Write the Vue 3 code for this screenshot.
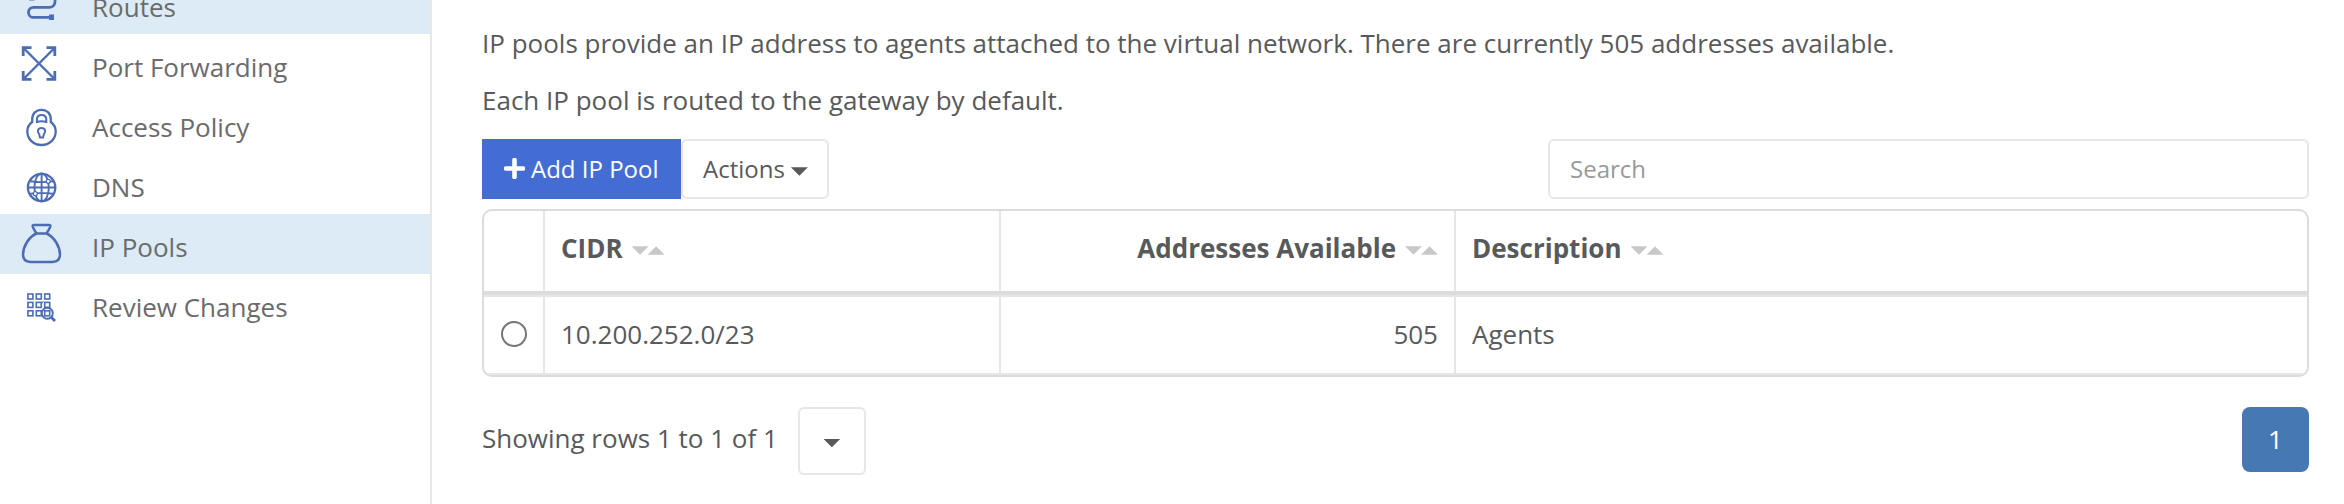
<script setup>
const navItems = [
  { label: 'Routes', icon: 'routes', active: true },
  { label: 'Port Forwarding', icon: 'forward' },
  { label: 'Access Policy', icon: 'lock' },
  { label: 'DNS', icon: 'globe' },
  { label: 'IP Pools', icon: 'pool', active: true },
  { label: 'Review Changes', icon: 'review' },
]
const columns = [
  { label: 'CIDR' },
  { label: 'Addresses Available', numeric: true },
  { label: 'Description' },
]
const rows = [{ cidr: '10.200.252.0/23', available: 505, description: 'Agents' }]
const cells = [0, 1, 2].flatMap((r) => [0, 1, 2].map((c) => ({ x: 27.9 + c * 8.4, y: 20 + r * 8.4 })))
</script>

<template>
  <div class="page">
    <nav class="sidebar">
      <a v-for="item in navItems" :key="item.label" class="nav-item" :class="{ active: item.active }">
        <svg class="nav-icon" width="80" height="60" viewBox="0 0 80 60" fill="none">
          <g v-if="item.icon === 'routes'" stroke-width="2.8">
            <path d="M29 25.500H34.500" opacity=".5" />
            <path d="M55 25.500C55.500 31 53 33.400 49.500 33.400H33.500A5 5 0 0 0 33.500 43.400H50" />
            <rect x="49" y="40.500" width="5" height="5.500" class="solid" />
          </g>
          <g v-else-if="item.icon === 'forward'" stroke-width="2.400">
            <path d="M23 13.500L55 45.500M55 13.500L23 45.500" />
            <path d="M23.200 22V13.700H31.500M46.500 13.700H54.800V22M54.800 37V45.300H46.500M31.500 45.300H23.200V37" stroke-width="2.800" />
          </g>
          <g v-else-if="item.icon === 'lock'" stroke-width="2.300">
            <path d="M32.200 28V25.200C32.200 19.500 36 15.800 41.500 15.800S50.800 19.500 50.800 25.200V28C53.800 30.300 55.700 33.500 55.700 37.200C55.700 45.300 49.500 51 41.500 51S27.300 45.300 27.300 37.200C27.300 33.500 29.200 30.300 32.200 28Z" />
            <path d="M36.900 28V25.500C36.900 22.500 38.800 21 41.500 21S46.300 22.500 46.300 25.500V28Q41.500 26.700 36.900 28Z" stroke-width="2" />
            <path d="M40 43.500L39.200 40.300C36.500 37.500 38 34 41.500 34S46.500 37.500 43.800 40.300L43 43.500Z" stroke-width="2" />
          </g>
          <g v-else-if="item.icon === 'globe'" stroke-width="2.300">
            <circle cx="41.600" cy="33.500" r="13.700" />
            <ellipse cx="41.600" cy="33.500" rx="7.200" ry="14" stroke-width="1.900" />
            <path d="M41.600 19.500V47.500M27.600 33.500H55.600M30.300 27.200Q41.600 29 52.900 27.200M30.300 39.800Q41.600 38 52.900 39.800" stroke-width="1.900" />
            <circle cx="48.200" cy="27.300" r="2" stroke-width="1.200" class="node" />
            <circle cx="35.300" cy="39.700" r="2" stroke-width="1.200" class="node" />
          </g>
          <g v-else-if="item.icon === 'pool'" stroke-width="2.500" stroke-linejoin="round">
            <path d="M36.500 19.500C34.500 16.500 33.500 14.800 32.700 12.600Q32.300 11 34 11H49Q50.700 11 50.300 12.600C49.500 14.800 48.500 16.500 46.500 19.500" />
            <path d="M36.500 19.500H46.500C54.500 23 60 33 60 40.500C60 45.500 57 47.900 52.500 47.900H30.500C26 47.900 23 45.500 23 40.500C23 33 28.500 23 36.500 19.500Z" />
          </g>
          <g v-else stroke-width="1.600">
            <rect v-for="(cell, i) in cells" :key="i" :x="cell.x" :y="cell.y" width="5" height="5" />
            <circle cx="47.300" cy="39.300" r="5.500" stroke-width="1.900" />
            <path d="M43.500 27L41 30.500" stroke-width="1" />
            <path d="M51 43L55 47" stroke-width="2.800" />
          </g>
        </svg>
        <span class="nav-label">{{ item.label }}</span>
      </a>
    </nav>

    <main class="content">
      <p>IP pools provide an IP address to agents attached to the virtual network. There are currently 505 addresses available.</p>
      <p>Each IP pool is routed to the gateway by default.</p>

      <div class="toolbar">
        <button class="btn add">
          <svg width="21" height="21" viewBox="0 0 21 21"><path d="M10.500 2V19M2 10.500H19" stroke="#fff" stroke-width="4.600" stroke-linecap="round" /></svg>
          <span>Add IP Pool</span>
        </button>
        <button class="btn actions"><span>Actions</span><i class="caret" /></button>
        <input class="search" type="text" placeholder="Search" />
      </div>

      <div class="table">
        <div class="row head">
          <div class="cell" />
          <div v-for="col in columns" :key="col.label" class="cell" :class="{ numeric: col.numeric }">
            <span>{{ col.label }}</span>
            <span class="sort"><i class="caret" /><i class="caret up" /></span>
          </div>
        </div>
        <div v-for="row in rows" :key="row.cidr" class="row body">
          <div class="cell pick"><span class="radio" /></div>
          <div class="cell">{{ row.cidr }}</div>
          <div class="cell numeric">{{ row.available }}</div>
          <div class="cell">{{ row.description }}</div>
        </div>
      </div>

      <div class="footer">
        <span class="summary">Showing rows 1 to 1 of 1</span>
        <button class="page-size"><i class="caret" /></button>
        <button class="page-number">1</button>
      </div>
    </main>
  </div>
</template>

<style>
body {
  margin: 0;
  background: #fff;
  overflow: hidden;
}
</style>

<style scoped>
.page,
.page * {
  box-sizing: border-box;
}
.page {
  display: flex;
  height: 504px;
  overflow: hidden;
  font: 26px/37px "Open Sans", "Noto Sans", sans-serif;
  color: #58595b;
}
.sidebar {
  flex: none;
  width: 432px;
  height: 530px;
  margin-top: -26px;
  border-right: 2px solid #e7e7e7;
}
.nav-item {
  display: flex;
  height: 60px;
  color: #6b6b6b;
}
.nav-item.active {
  background: #ddebf6;
}
.nav-icon {
  flex: none;
  margin-right: 12px;
  stroke: #4c6cb3;
}
.solid {
  fill: #4c6cb3;
  stroke: none;
}
.node {
  fill: #fff;
}
.nav-label {
  padding-top: 15px;
}
.content {
  flex: 1;
  padding: 25px 35px 0 50px;
}
p {
  margin: 0 0 20px;
}
button,
input {
  margin: 0;
  padding: 0;
  font: inherit;
  color: inherit;
  background: #fff;
  border: 2px solid #e7e7e7;
  border-radius: 6px;
}
.toolbar {
  display: flex;
  height: 60px;
}
.btn {
  display: flex;
  align-items: center;
  padding-bottom: 2px;
  font-size: 24px;
}
.add {
  width: 199px;
  padding-left: 22px;
  gap: 6px;
  border: 0;
  border-radius: 0;
  background: #446dd4;
  color: #fff;
}
.actions {
  width: 148px;
  padding-left: 20px;
  gap: 6px;
}
.caret {
  display: block;
  width: 17px;
  height: 8.5px;
  background: currentColor;
  clip-path: polygon(0 0, 100% 0, 50% 100%);
}
.caret.up {
  margin-left: -1px;
  clip-path: polygon(0 100%, 100% 100%, 50% 0);
}
.actions .caret {
  margin-top: 7px;
}
.search {
  width: 761px;
  margin-left: auto;
  padding: 0 20px 2px;
  font-size: 24px;
}
.search::placeholder {
  color: #999;
  opacity: 1;
}
.table {
  height: 168px;
  margin-top: 10px;
  border: 2px solid #dcdcdc;
  border-radius: 10px;
  overflow: hidden;
}
.row {
  display: grid;
  grid-template-columns: 59px 456px 455px 1fr;
}
.head {
  height: 84px;
  border-bottom: 4px solid #dcdcdc;
  font-weight: 700;
}
.body {
  height: 80px;
  border-top: 2px solid #e6e6e6;
  border-bottom: 2px solid #e6e6e6;
}
.cell {
  display: flex;
  align-items: center;
  padding: 0 16px 1px;
}
.head .cell {
  padding-bottom: 6px;
}
.cell + .cell {
  border-left: 2px solid #e6e6e6;
}
.numeric {
  justify-content: flex-end;
}
.pick {
  padding: 0 0 2px 17px;
}
.radio {
  width: 26px;
  height: 26px;
  border: 2px solid #767676;
  border-radius: 50%;
}
.sort {
  display: flex;
  margin: 5px 0 0 9px;
  color: #c8c8c8;
}
.footer {
  display: flex;
  align-items: flex-start;
  margin-top: 30px;
}
.summary {
  padding-top: 13px;
}
.page-size {
  display: flex;
  align-items: center;
  justify-content: center;
  width: 68px;
  height: 68px;
  margin-left: 20px;
}
.page-size .caret {
  margin-top: 4px;
}
.page-number {
  width: 67px;
  height: 65px;
  margin-left: auto;
  border: 0;
  border-radius: 8px;
  background: #4678b4;
  color: #fff;
}
</style>
